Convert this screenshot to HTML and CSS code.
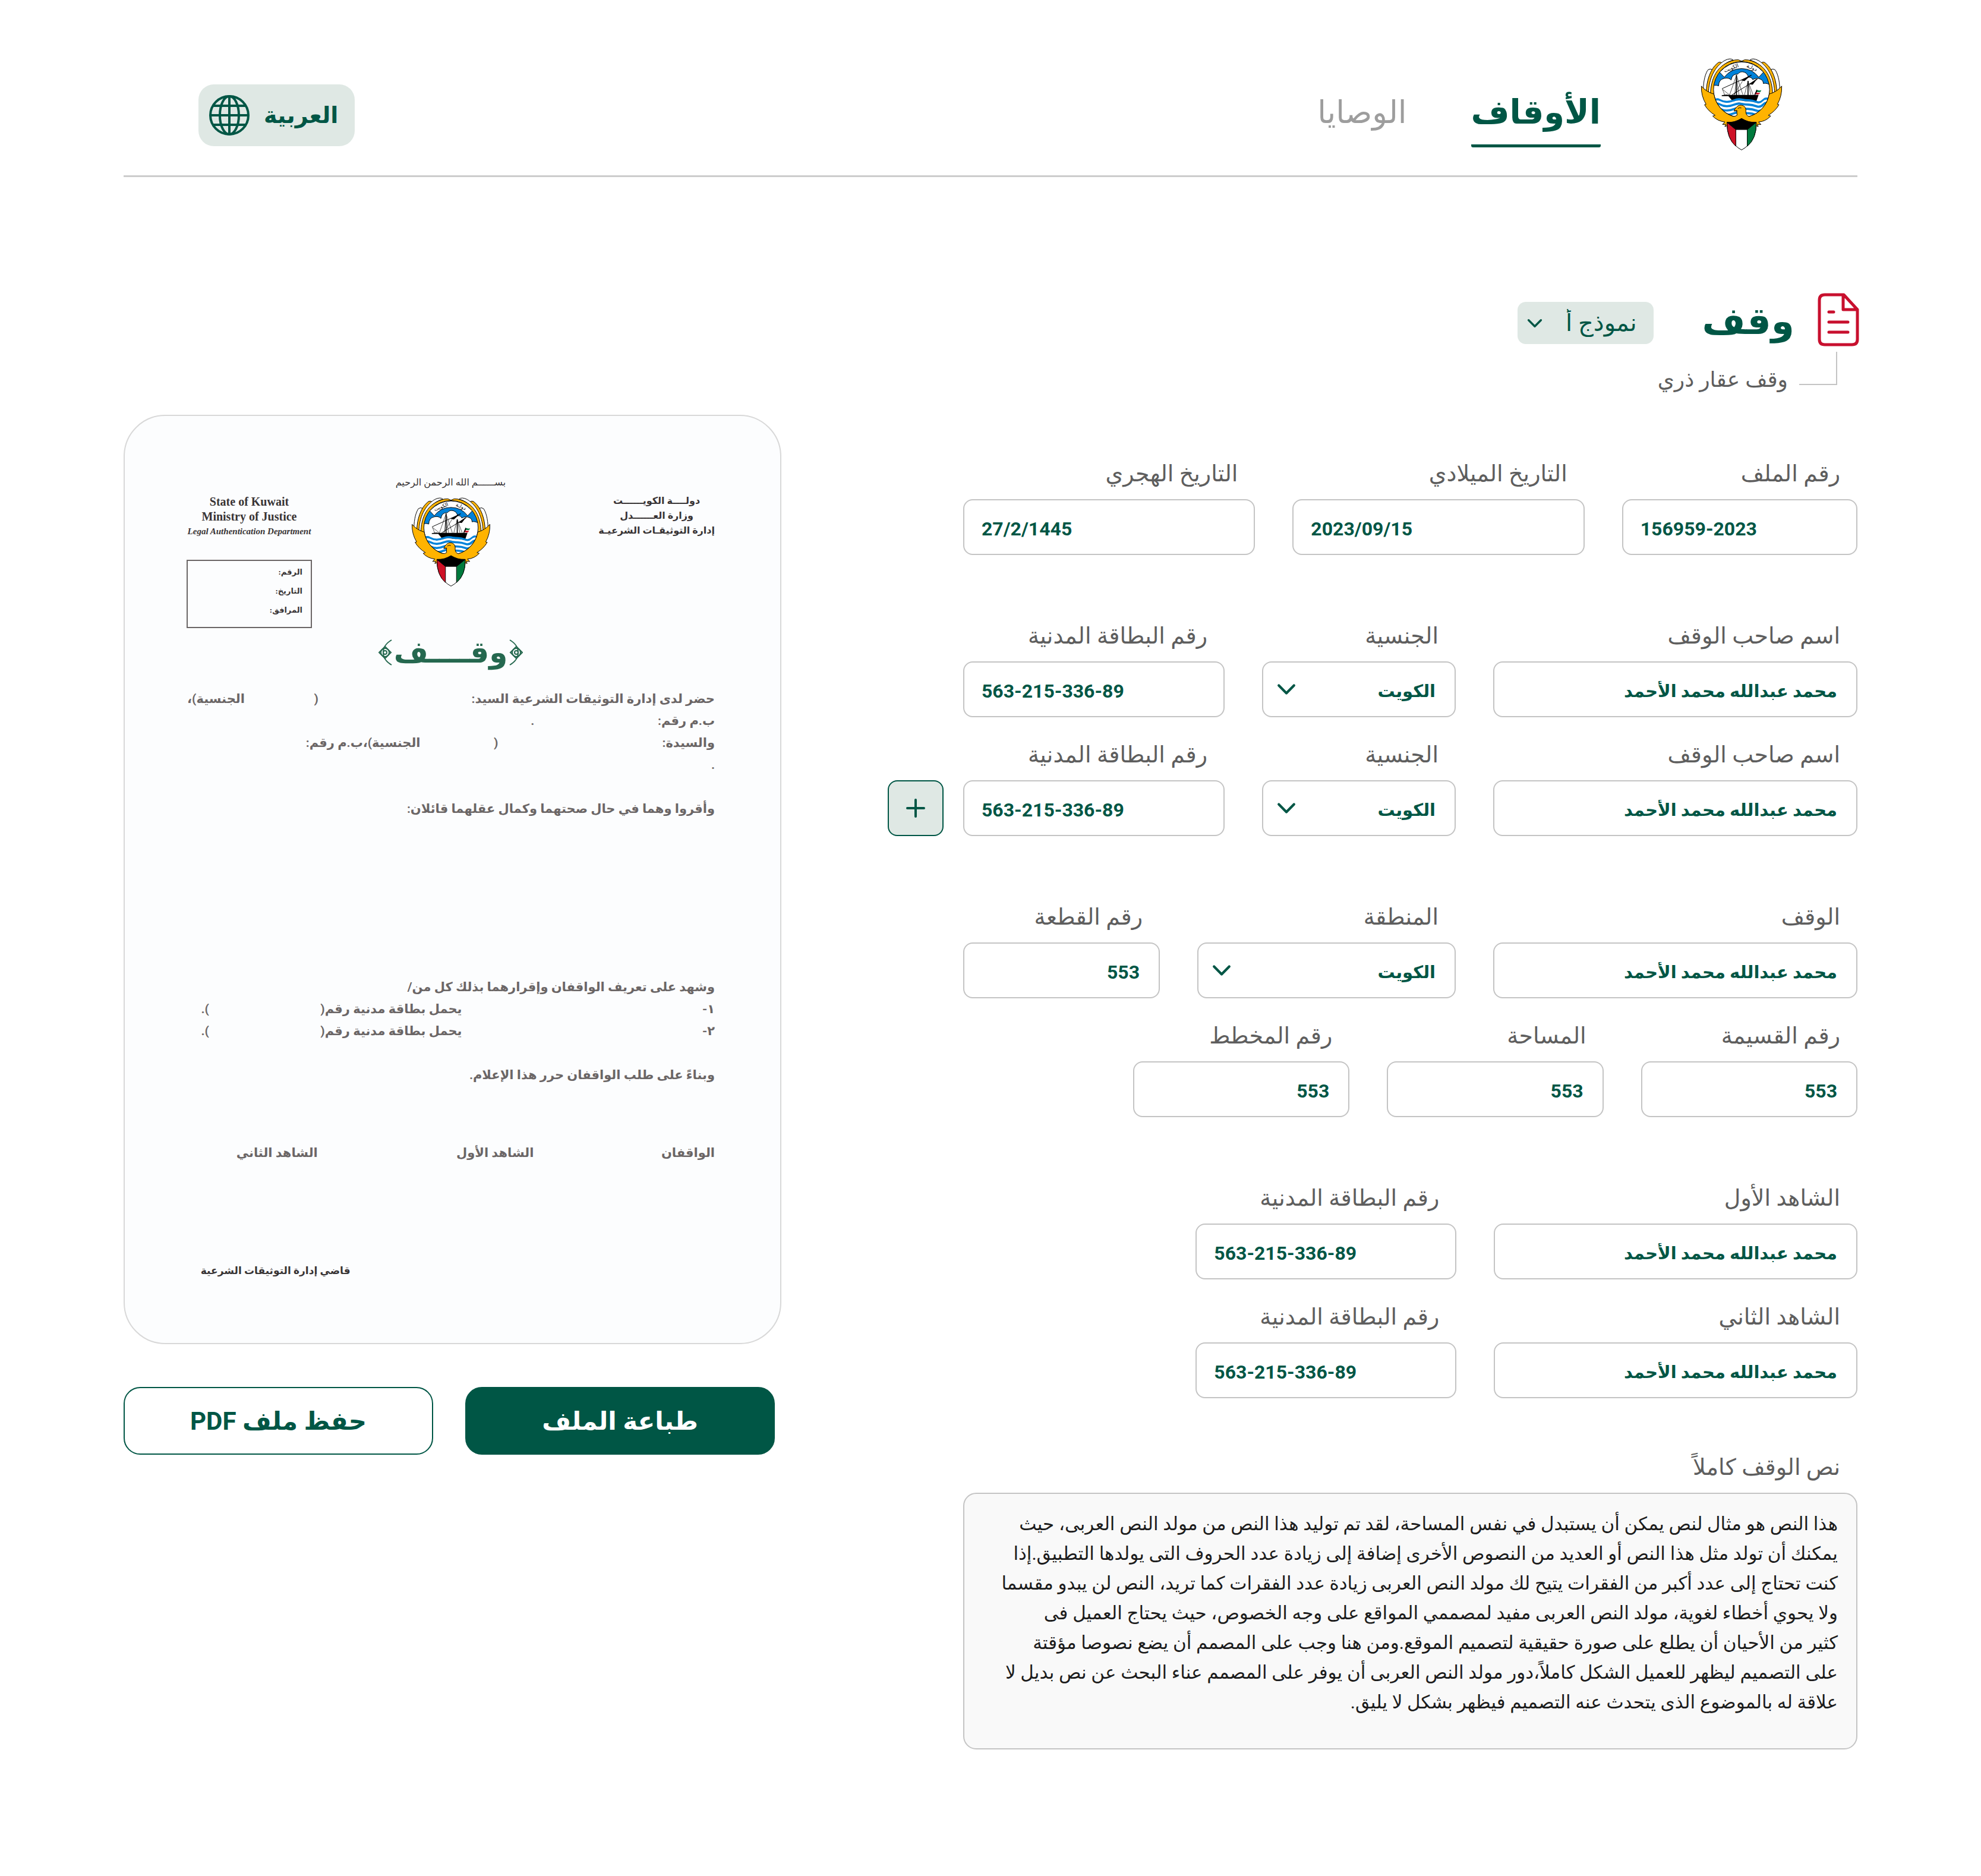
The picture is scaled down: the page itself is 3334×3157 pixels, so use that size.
FILE: index.html
```html
<!DOCTYPE html>
<html lang="ar" dir="rtl">
<head>
<meta charset="utf-8">
<title>الأوقاف</title>
<meta name="viewport" content="width=device-width, initial-scale=1">
<link rel="stylesheet" href="styles.css">
</head>
<body>
<svg class="sprite" aria-hidden="true">
  <symbol id="chevron" viewBox="0 0 30 18"><path d="M3 3l12 12L27 3" fill="none" stroke="currentColor" stroke-width="4" stroke-linecap="round" stroke-linejoin="round"/></symbol>
  <symbol id="ornament" viewBox="0 0 24 46"><g fill="none" stroke="currentColor" stroke-width="2"><path d="M22 2C12 8 8 14 8 23s4 15 14 21"/><circle cx="11" cy="23" r="7"/><circle cx="11" cy="23" r="3"/><path d="M11 13l10 10-10 10L1 23z"/></g></symbol>
</svg>

<header class="topbar">
  <svg class="logo" viewBox="66 50 418 476" role="img" aria-label="دولة الكويت">
    <g id="emblem">
      <g id="plumes" stroke="#000" stroke-width="3" stroke-linejoin="round">
        <path fill="#fff" d="M80 215C80 165 92 128 104 112Q114 104 128 112C108 140 98 180 98 225z"/>
        <path fill="#ffb300" d="M95 228C95 170 116 108 150 80Q162 68 174 76C140 104 114 160 109 234z"/>
        <path fill="#fff" d="M106 232C108 160 136 96 190 64Q218 50 232 62C160 84 122 150 118 238z"/>
        <path fill="#ffb300" d="M116 240C118 160 146 84 240 62Q260 57 275 68V90L134 240z"/>
      </g>
      <use href="#plumes" transform="translate(550 0) scale(-1 1)"/>
      <clipPath id="disc"><circle cx="275" cy="213" r="143"/></clipPath>
      <g clip-path="url(#disc)">
        <path fill="#0082d9" d="M120 60h310v320H120z"/>
        <path fill="#fff" stroke="#000" stroke-width="3" d="M120 200Q135 185 158 194Q158 162 186 156Q208 150 222 164Q226 132 256 134Q268 118 288 124Q306 130 310 150Q326 148 332 162Q352 150 372 160Q386 166 386 182Q404 176 430 196V270H120z"/>
        <path fill="#fff" d="M120 256h310v120H120z"/>
        <path d="M174 242Q200 236 210 240H362L348 280H236L208 246H174z"/>
        <g fill="none" stroke-width="11">
          <path stroke="#0082d9" d="M126 276Q144 256 163 266T200 276T237 268T275 264T312 268T350 276T387 266T424 276"/>
          <path stroke="#fff" d="M126 287Q144 267 163 277T200 287T237 279T275 275T312 279T350 287T387 277T424 287"/>
          <path stroke="#0082d9" d="M126 298Q144 278 163 288T200 298T237 290T275 286T312 290T350 298T387 288T424 298"/>
          <path stroke="#0082d9" d="M126 320Q144 300 163 310T200 320T237 312T275 308T312 312T350 320T387 310T424 320"/>
          <path stroke="#0082d9" d="M126 342Q144 322 163 332T200 342T237 334T275 330T312 334T350 342T387 332T424 342"/>
        </g>
      </g>
      <circle cx="275" cy="213" r="143" fill="none" stroke="#000" stroke-width="3"/>
      <path fill="#fff" stroke="#000" stroke-width="3" d="M163 124Q212 72 275 72T387 124L363 150Q330 106 275 106T187 150z"/>
      <g class="emblem-text"><text x="226" y="111" transform="rotate(-22 226 111)">الكويت</text><text x="324" y="109" transform="rotate(24 324 109)">دولـة</text></g>
      <g fill="none" stroke="#000" stroke-width="2">
        <path stroke-width="5" d="M249 138V242M308 168V242"/>
        <path stroke-width="3" d="M176 208L326 140M226 240L356 160"/>
        <path d="M176 208L190 242M178 212L216 242M249 140L214 240M249 140L282 240M249 150L240 240M249 150L262 240M308 170L290 240M308 170L322 240M308 170L334 240M280 170L236 240"/>
      </g>
      <path d="M272 166L328 136L290 170zM312 186L358 154L332 188z"/>
      <path fill="#007a3d" d="M352 214q12 6 24 2l-4 8q-12 4-24-2z"/><path fill="#ce1126" d="M346 226q12 6 24 2l-4 8q-12 4-24-2z"/><path d="M352 212l-12 30h4l12-22z"/>
      <g stroke="#000" stroke-width="3" stroke-linejoin="round">
        <path fill="#ffb300" d="M70 195Q95 225 134 236A143 143 0 0 0 230 349Q242 352 252 344Q252 330 250 319L237 323Q240 310 250 302Q262 288 282 294Q300 302 297 328Q298 346 314 350A143 143 0 0 0 416 236Q455 225 480 195Q482 245 458 288L466 290Q448 322 412 344L424 348Q398 376 362 378L374 391L356 390L360 402L347 396L275 362L203 396L190 402L194 390L178 391L190 378Q152 374 128 348L140 344Q104 322 86 290L94 288Q68 245 70 195z"/>
        <path fill="#fff" d="M201 380H350Q354 478 275 521Q198 478 201 380z"/>
        <path fill="#ce1126" d="M201 380L246 417V502Q200 464 201 380z"/>
        <path fill="#007a3d" d="M350 380L304 417V502Q352 464 350 380z"/>
        <path d="M201 380Q240 382 275 360Q310 382 350 380L304 417H246z"/>
        <path fill="none" d="M256 310q8-8 18-3M240 322h14"/>
      </g>
    </g>
  </svg>
  <nav class="nav">
    <a class="nav-link is-active" href="#awqaf">الأوقاف</a>
    <a class="nav-link" href="#wasaya">الوصايا</a>
  </nav>
  <button class="lang" type="button">
    <span>العربية</span>
    <svg class="globe" viewBox="0 0 68 68" fill="none" stroke="currentColor" stroke-width="4" aria-hidden="true"><circle cx="34" cy="34" r="32"/><ellipse cx="34" cy="34" rx="16" ry="32"/><path d="M34 2v64M2 34h64M7 18h54M7 50h54"/></svg>
  </button>
</header>

<main class="page">
  <section class="heading">
    <div class="heading-row">
      <svg class="file-icon" viewBox="0 0 70 90" fill="none" stroke="currentColor" stroke-width="5" stroke-linecap="round" stroke-linejoin="round" aria-hidden="true"><path d="M44 3H12Q3 3 3 12v66q0 9 9 9h46q9 0 9-9V28zM43 3v25h24M19 32h8M19 49h32M19 66h32"/></svg>
      <h1 class="title">وقف</h1>
      <div class="picker">
        <select class="picker-select" aria-label="النموذج"><option>نموذج أ</option></select>
        <svg class="picker-chevron" aria-hidden="true"><use href="#chevron"/></svg>
      </div>
    </div>
    <div class="subheading"><span class="elbow"></span><p class="subtitle">وقف عقار ذري</p></div>
  </section>

  <div class="columns">
    <form class="form">
      <div class="group">
        <div class="row row-file">
          <div class="field"><label for="file-no">رقم الملف</label><input class="num ltr" id="file-no" value="156959-2023"></div>
          <div class="field"><label for="date-g">التاريخ الميلادي</label><input class="num ltr" id="date-g" value="2023/09/15"></div>
          <div class="field"><label for="date-h">التاريخ الهجري</label><input class="num ltr" id="date-h" value="27/2/1445"></div>
        </div>
      </div>
      <div class="group">
        <div class="row row-owner">
          <div class="field"><label for="owner-1">اسم صاحب الوقف</label><input id="owner-1" value="محمد عبدالله محمد الأحمد"></div>
          <div class="field"><label for="nat-1">الجنسية</label><div class="pick"><select id="nat-1"><option>الكويت</option></select><svg class="chevron" aria-hidden="true"><use href="#chevron"/></svg></div></div>
          <div class="field"><label for="civil-1">رقم البطاقة المدنية</label><input class="num ltr" id="civil-1" value="563-215-336-89"></div>
        </div>
        <div class="row-with-action">
          <div class="row row-owner">
            <div class="field"><label for="owner-2">اسم صاحب الوقف</label><input id="owner-2" value="محمد عبدالله محمد الأحمد"></div>
            <div class="field"><label for="nat-2">الجنسية</label><div class="pick"><select id="nat-2"><option>الكويت</option></select><svg class="chevron" aria-hidden="true"><use href="#chevron"/></svg></div></div>
            <div class="field"><label for="civil-2">رقم البطاقة المدنية</label><input class="num ltr" id="civil-2" value="563-215-336-89"></div>
          </div>
          <button class="add" type="button" aria-label="إضافة"><svg viewBox="0 0 32 32" fill="none" stroke="currentColor" stroke-width="4" stroke-linecap="round"><path d="M16 2v28M2 16h28"/></svg></button>
        </div>
      </div>
      <div class="group">
        <div class="row row-waqf">
          <div class="field"><label for="waqf">الوقف</label><input id="waqf" value="محمد عبدالله محمد الأحمد"></div>
          <div class="field"><label for="area">المنطقة</label><div class="pick"><select id="area"><option>الكويت</option></select><svg class="chevron" aria-hidden="true"><use href="#chevron"/></svg></div></div>
          <div class="field"><label for="block">رقم القطعة</label><input class="num" id="block" value="553"></div>
        </div>
        <div class="row row-plot">
          <div class="field"><label for="plot">رقم القسيمة</label><input class="num" id="plot" value="553"></div>
          <div class="field"><label for="size">المساحة</label><input class="num" id="size" value="553"></div>
          <div class="field"><label for="plan">رقم المخطط</label><input class="num" id="plan" value="553"></div>
        </div>
      </div>
      <div class="group">
        <div class="row row-witness">
          <div class="field"><label for="wit-1">الشاهد الأول</label><input id="wit-1" value="محمد عبدالله محمد الأحمد"></div>
          <div class="field"><label for="wid-1">رقم البطاقة المدنية</label><input class="num ltr" id="wid-1" value="563-215-336-89"></div>
        </div>
        <div class="row row-witness">
          <div class="field"><label for="wit-2">الشاهد الثاني</label><input id="wit-2" value="محمد عبدالله محمد الأحمد"></div>
          <div class="field"><label for="wid-2">رقم البطاقة المدنية</label><input class="num ltr" id="wid-2" value="563-215-336-89"></div>
        </div>
      </div>
      <div class="group group-text">
        <div class="field"><label for="full">نص الوقف كاملاً</label><textarea id="full" rows="7">هذا النص هو مثال لنص يمكن أن يستبدل في نفس المساحة، لقد تم توليد هذا النص من مولد النص العربى، حيث
يمكنك أن تولد مثل هذا النص أو العديد من النصوص الأخرى إضافة إلى زيادة عدد الحروف التى يولدها التطبيق.إذا
كنت تحتاج إلى عدد أكبر من الفقرات يتيح لك مولد النص العربى زيادة عدد الفقرات كما تريد، النص لن يبدو مقسما
ولا يحوي أخطاء لغوية، مولد النص العربى مفيد لمصممي المواقع على وجه الخصوص، حيث يحتاج العميل فى
كثير من الأحيان أن يطلع على صورة حقيقية لتصميم الموقع.ومن هنا وجب على المصمم أن يضع نصوصا مؤقتة
على التصميم ليظهر للعميل الشكل كاملاً،دور مولد النص العربى أن يوفر على المصمم عناء البحث عن نص بديل لا
علاقة له بالموضوع الذى يتحدث عنه التصميم فيظهر بشكل لا يليق.</textarea></div>
      </div>
    </form>

    <aside class="preview">
      <article class="sheet">
        <div class="sheet-head">
          <div class="ministry-ar"><p>دولــــة الكويــــــت</p><p>وزارة العــــــدل</p><p>إدارة التوثيقـات الشرعيـة</p></div>
          <div class="sheet-center">
            <p class="basmala">بســــــم الله الرحمن الرحيم</p>
            <svg class="sheet-emblem" viewBox="66 50 418 476" role="img" aria-label="دولة الكويت"><use href="#emblem"/></svg>
            <h2 class="sheet-title"><svg class="orn orn-flip" aria-hidden="true"><use href="#ornament"/></svg><span>وقــــف</span><svg class="orn" aria-hidden="true"><use href="#ornament"/></svg></h2>
          </div>
          <div class="ministry-en" dir="ltr">
            <p>State of Kuwait</p><p>Ministry of Justice</p><p class="dept">Legal Authentication Department</p>
            <div class="ref-box" dir="rtl"><p>الرقم:</p><p>التاريخ:</p><p>المرافق:</p></div>
          </div>
        </div>
        <div class="sheet-body">
          <p class="line line-man"><span>حضر لدى إدارة التوثيقات الشرعية السيد:</span><span>(</span><span>الجنسية)،</span></p>
          <p class="line line-id"><span>ب.م رقم:</span><span>.</span></p>
          <p class="line line-woman"><span>والسيدة:</span><span>(</span><span>الجنسية)،ب.م رقم:</span></p>
          <p class="line">.</p>
          <p class="line declare">وأقروا وهما في حال صحتهما وكمال عقلهما قائلان:</p>
          <p class="line">وشهد على تعريف الواقفان وإقرارهما بذلك كل من/</p>
          <p class="line line-card"><span>١-</span><span>يحمل بطاقة مدنية رقم(</span><span>).</span></p>
          <p class="line line-card"><span>٢-</span><span>يحمل بطاقة مدنية رقم(</span><span>).</span></p>
          <p class="line closing">وبناءً على طلب الواقفان حرر هذا الإعلام.</p>
          <p class="line line-sign"><span>الواقفان</span><span>الشاهد الأول</span><span>الشاهد الثاني</span></p>
          <p class="line judge">قاضي إدارة التوثيقات الشرعية</p>
        </div>
      </article>
      <div class="actions">
        <button class="btn btn-primary" type="button">طباعة الملف</button>
        <button class="btn" type="button">حفظ ملف PDF</button>
      </div>
    </aside>
  </div>
</main>
</body>
</html>
```
FILE: styles.css
```css
:root {
  --green: #005645;
  --mint: #dfe8e4;
  --grey: #5e5e5e;
  --line: #c4c4c4;
}

* { box-sizing: border-box; }

body {
  margin: 0;
  background: #fff;
  color: var(--grey);
  font-family: Roboto, "DejaVu Sans", sans-serif;
}

h1, h2, p { margin: 0; }

button, input, select, textarea {
  font-family: inherit;
  color: var(--green);
}

.sprite {
  position: absolute;
  width: 0;
  height: 0;
}

.emblem-text {
  font-family: "DejaVu Sans", sans-serif;
  font-size: 27px;
  text-anchor: middle;
}

/* Top bar */
.topbar {
  display: flex;
  align-items: flex-end;
  margin: 0 208px;
  padding: 97px 126px 41px;
  border-bottom: 3px solid #ccc;
}

.logo {
  width: 138px;
  height: 157px;
}

.nav {
  display: flex;
  align-items: flex-end;
  gap: 108px;
  margin-inline-start: 168px;
  margin-bottom: 6px;
}

.nav-link {
  padding-bottom: 14px;
  border-bottom: 5px solid transparent;
  border-radius: 3px;
  color: #9d9d9d;
  font-size: 53px;
  line-height: 80px;
  text-decoration: none;
}

.nav-link.is-active {
  border-color: var(--green);
  color: var(--green);
  font-size: 56px;
  font-weight: 700;
}

.lang {
  display: flex;
  align-items: center;
  gap: 24px;
  height: 104px;
  margin-inline-start: auto;
  margin-bottom: 8px;
  padding: 0 28px 0 18px;
  border: 0;
  border-radius: 26px;
  background: var(--mint);
  font-size: 38px;
  font-weight: 700;
}

.globe {
  width: 68px;
  height: 68px;
}

/* Heading */
.page { padding: 195px 208px 212px; }

.heading-row {
  display: flex;
  align-items: flex-end;
  margin-inline-start: -3px;
}

.file-icon {
  width: 70px;
  height: 90px;
  color: #c8102e;
}

.title {
  margin-inline-start: 39px;
  color: var(--green);
  font-size: 63px;
  line-height: 84px;
}

.picker, .pick {
  display: grid;
  align-items: center;
}

.picker { margin: 0 82px 4px 0; }

.picker > *, .pick > * { grid-area: 1 / 1; }

.picker-select {
  width: 229px;
  height: 71px;
  padding: 0 28px;
  border: 0;
  border-radius: 14px;
  background: var(--mint);
  font-size: 40px;
  font-weight: 500;
  appearance: none;
}

.picker-chevron, .chevron {
  justify-self: end;
  color: var(--green);
  pointer-events: none;
}

.picker-chevron {
  width: 26px;
  height: 16px;
  margin-inline-end: 16px;
}

.subheading {
  display: flex;
  height: 82px;
  padding-top: 9px;
}

.elbow {
  width: 64px;
  height: 56px;
  margin-inline: 34px 19px;
  border: solid var(--line);
  border-width: 0 2px 2px 0;
}

.subtitle {
  padding-top: 20px;
  font-size: 36px;
  line-height: 54px;
}

/* Two columns */
.columns {
  display: grid;
  grid-template-columns: 1632fr 1107fr;
  gap: 179px;
  align-items: start;
  padding-top: 33px;
}

/* Form */
.form {
  display: flex;
  flex-direction: column;
  gap: 109px;
  padding-top: 72px;
}

.group {
  display: flex;
  flex-direction: column;
  gap: 36px;
  padding-inline-end: 127px;
}

.group-text { margin-top: -20px; }

.row {
  display: grid;
  flex: none;
  gap: 63px;
}

.row-file { grid-template-columns: 396fr 491fr 491fr; }
.row-owner { grid-template-columns: 613fr 326fr 440fr; }
.row-waqf { grid-template-columns: 613fr 435fr 331fr; }
.row-plot { grid-template-columns: repeat(3, 1fr); padding-inline-end: 19%; }
.row-witness { grid-template-columns: 613fr 440fr; padding-inline-end: 26%; }

.row-with-action {
  display: flex;
  align-items: flex-end;
  gap: 33px;
  margin-inline-end: -127px;
}

.row-with-action .row { flex: 1; }

.field {
  display: flex;
  flex-direction: column;
  gap: 16px;
  min-width: 0;
}

.field label {
  padding-inline-start: 29px;
  font-size: 38px;
  line-height: 54px;
  white-space: nowrap;
}

.field input, .field select {
  width: 100%;
  height: 94px;
  padding: 6px 32px 0;
  border: 2px solid var(--line);
  border-radius: 16px;
  background: #fff;
  font-size: 29px;
  font-weight: 700;
  appearance: none;
}

.field .num { font-size: 32px; }

.field .ltr {
  direction: ltr;
  padding-inline: 29px;
}

.chevron {
  width: 32px;
  height: 20px;
  margin-inline-end: 25px;
}

.field textarea {
  display: block;
  width: 100%;
  height: 432px;
  padding: 26px 31px;
  border: 2px solid var(--line);
  border-radius: 22px;
  background: #f9f9f9;
  color: #1c1c1c;
  font-size: 31px;
  line-height: 50px;
  white-space: pre;
  overflow: hidden;
  resize: none;
}

.add {
  display: grid;
  place-items: center;
  width: 94px;
  height: 94px;
  border: 2px solid var(--green);
  border-radius: 16px;
  background: var(--mint);
}

.add svg {
  width: 32px;
  height: 32px;
}

/* Document preview */
.sheet {
  min-height: 1564px;
  padding: 88px 110px 80px 104px;
  border: 2px solid #d8d8d8;
  border-radius: 70px;
  background: #fcfdfe;
  color: #6b6666;
}

.sheet-head {
  display: grid;
  grid-template-columns: 1fr auto 1fr;
  color: #383435;
}

.ministry-ar {
  justify-self: start;
  padding-top: 42px;
  font-size: 16px;
  font-weight: 700;
  line-height: 25px;
  text-align: center;
}

.sheet-center {
  display: flex;
  flex-direction: column;
  align-items: center;
}

.basmala {
  font-size: 16px;
  line-height: 48px;
}

.sheet-emblem {
  width: 134px;
  height: 152px;
}

.sheet-title {
  display: flex;
  align-items: center;
  gap: 2px;
  margin-top: 64px;
  color: #25684f;
  font-size: 50px;
  line-height: 92px;
}

.orn {
  width: 24px;
  height: 46px;
}

.orn-flip { transform: scaleX(-1); }

.ministry-en {
  justify-self: end;
  padding-top: 44px;
  font-family: "Liberation Serif", "DejaVu Sans", serif;
  font-size: 20px;
  font-weight: 700;
  line-height: 25px;
  text-align: center;
}

.dept {
  font-size: 15px;
  font-style: italic;
}

.ref-box {
  width: 211px;
  height: 115px;
  margin-top: 35px;
  padding: 3px 14px;
  border: 2px solid #6b6666;
  font-size: 13px;
  line-height: 32px;
  text-align: start;
}

.sheet-body {
  padding-top: 14px;
  font-size: 21px;
  font-weight: 700;
  line-height: 37px;
}

.line {
  display: grid;
  min-height: 37px;
  white-space: nowrap;
}

.line-man { grid-template-columns: 668fr 124fr 98fr; }
.line-id { grid-template-columns: 304fr 586fr; }
.line-woman { grid-template-columns: 365fr 131fr 394fr; }
.line-card { grid-template-columns: 426fr 426fr 38fr; }
.line-sign { grid-template-columns: 305fr 364fr 221fr; }

.declare { margin: 37px 0 263px; }
.closing { margin: 37px 0 94px; }

.judge {
  margin-top: 161px;
  padding-inline-start: 69%;
  color: #383435;
  font-size: 17px;
}

.actions {
  display: grid;
  grid-template-columns: 1fr 1fr;
  gap: 54px;
  margin-top: 72px;
  padding-inline-start: 11px;
}

.btn {
  height: 114px;
  border: 2px solid var(--green);
  border-radius: 28px;
  background: #fff;
  font-size: 42px;
  font-weight: 700;
}

.btn-primary {
  background: var(--green);
  color: #fff;
}
```
